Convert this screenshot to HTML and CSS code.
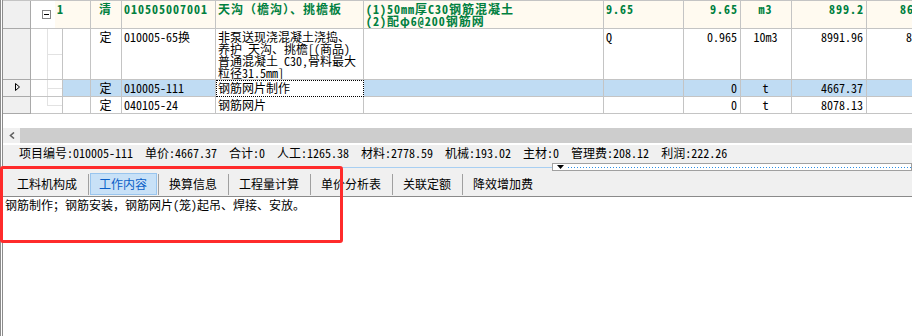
FILE: index.html
```html
<!DOCTYPE html>
<html lang="zh-CN">
<head>
    <meta charset="UTF-8">
    <meta name="viewport" content="width=device-width, initial-scale=1.0">
    <title>定额工作内容</title>
    <link rel="stylesheet" href="styles.css">
</head>
<body>
    <div class="frame">
        <div class="grid">
            <div class="row row-bill">
                <div class="cell head"></div>
                <div class="cell tree"><span class="fold"></span></div>
                <div class="cell">1</div>
                <div class="cell center">清</div>
                <div class="cell">010505007001</div>
                <div class="cell">天沟（檐沟）、挑檐板</div>
                <div class="cell">(1)50mm厚C30钢筋混凝土<br>(2)配φ6@200钢筋网</div>
                <div class="cell">9.65</div>
                <div class="cell num">9.65</div>
                <div class="cell center">m3</div>
                <div class="cell num">899.2</div>
                <div class="cell num">8677.28</div>
            </div>
            <div class="row row-tall">
                <div class="cell head"></div>
                <div class="cell tree tree-mid"></div>
                <div class="cell"></div>
                <div class="cell center">定</div>
                <div class="cell">010005-65换</div>
                <div class="cell">非泵送现浇混凝土浇捣、<br>养护 天沟、挑檐[(商品)<br>普通混凝土 C30,骨料最大<br>粒径31.5mm]</div>
                <div class="cell"></div>
                <div class="cell">Q</div>
                <div class="cell num">0.965</div>
                <div class="cell center">10m3</div>
                <div class="cell num">8991.96</div>
                <div class="cell num">8677.24</div>
            </div>
            <div class="row row-current">
                <div class="cell head"><svg class="marker" width="5" height="8" viewBox="0 0 5 8"><polygon points="0.5,0.5 4.5,4 0.5,7.5" fill="none" stroke="#000" stroke-width="1"/></svg></div>
                <div class="cell tree tree-mid"></div>
                <div class="cell"></div>
                <div class="cell center">定</div>
                <div class="cell">010005-111</div>
                <div class="cell focus">钢筋网片制作</div>
                <div class="cell"></div>
                <div class="cell"></div>
                <div class="cell num">0</div>
                <div class="cell center">t</div>
                <div class="cell num">4667.37</div>
                <div class="cell num">0</div>
            </div>
            <div class="row">
                <div class="cell head"></div>
                <div class="cell tree tree-end"></div>
                <div class="cell"></div>
                <div class="cell center">定</div>
                <div class="cell">040105-24</div>
                <div class="cell">钢筋网片</div>
                <div class="cell"></div>
                <div class="cell"></div>
                <div class="cell num">0</div>
                <div class="cell center">t</div>
                <div class="cell num">8078.13</div>
                <div class="cell num">0</div>
            </div>
        </div>

        <div class="hscroll">
            <div class="hscroll-btn">
                <svg width="6" height="7" viewBox="0 0 6 7"><polyline points="5,0.5 1.5,3.5 5,6.5" fill="none" stroke="#606060" stroke-width="1.6"/></svg>
            </div>
            <div class="hscroll-thumb"></div>
        </div>

        <div class="status">
            <span>项目编号:010005-111</span>
            <span>单价:4667.37</span>
            <span>合计:0</span>
            <span>人工:1265.38</span>
            <span>材料:2778.59</span>
            <span>机械:193.02</span>
            <span>主材:0</span>
            <span>管理费:208.12</span>
            <span>利润:222.26</span>
        </div>

        <div class="splitter">
            <div class="splitter-line"></div>
            <div class="splitter-box">
                <svg width="7" height="4" viewBox="0 0 7 4"><polygon points="0,0 7,0 3.5,4" fill="#000"/></svg>
                <div class="splitter-dots"></div>
            </div>
        </div>

        <div class="tabs">
            <div class="tab">工料机构成</div>
            <div class="sep"></div>
            <div class="tab active">工作内容</div>
            <div class="sep"></div>
            <div class="tab">换算信息</div>
            <div class="sep"></div>
            <div class="tab">工程量计算</div>
            <div class="sep"></div>
            <div class="tab">单价分析表</div>
            <div class="sep"></div>
            <div class="tab">关联定额</div>
            <div class="sep"></div>
            <div class="tab">降效增加费</div>
        </div>

        <div class="content">钢筋制作；钢筋安装，钢筋网片(笼)起吊、焊接、安放。</div>
    </div>

    <div class="annotation"></div>
</body>
</html>
```

FILE: styles.css
```css
body {
    margin: 0;
    position: relative;
    font-family: "Noto Sans Mono CJK SC", "Noto Sans CJK SC", sans-serif;
    font-size: 12px;
    color: #000;
    background: #fff;
}
.frame {
    height: 336px;
    border-left: 3px double #8c8c8c;
    overflow: hidden;
}

/* grid */
.grid {
    border-top: 1px solid #c4c4c4;
    overflow: hidden;
}
.row {
    display: grid;
    grid-template-columns: 28px 32px 28px 31px 94px 148px 240px 80px 57px 51px 75px 85px;
    width: 949px;
    height: 17px;
}
.row-bill {
    grid-template-columns: 28px 24px 36px 31px 94px 148px 240px 80px 57px 51px 75px 85px;
    height: 28px;
}
.row-tall {
    height: 51px;
}
.cell {
    box-sizing: border-box;
    border-right: 1px solid #c4c4c4;
    border-bottom: 1px solid #c4c4c4;
    padding: 2px 3px 0 2px;
    line-height: 12px;
    white-space: nowrap;
    overflow: hidden;
}
.cell.head {
    background-color: #f0f0f0;
    border-color: #a9a9a9;
    padding: 3px 0 0 12px;
}
.marker {
    display: block;
}
.center {
    text-align: center;
}
.num {
    text-align: right;
}
.row-bill .cell {
    background-color: #fffaf0;
    color: #00803f;
    font-weight: bold;
    letter-spacing: 1px;
}
.row-bill .cell.num {
    padding-right: 2px;
}
.row-bill .cell.head {
    background-color: #f0f0f0;
}
.row-bill .cell.tree {
    background-color: #fff;
    border-right: none;
    padding: 9px 0 0 11px;
}
.fold {
    display: block;
    width: 9px;
    height: 9px;
    box-sizing: border-box;
    border: 1px solid #848484;
    background: linear-gradient(#000, #000) no-repeat center / 5px 1px;
}
.tree-mid {
    background:
        linear-gradient(#e2e2e2, #e2e2e2) no-repeat 16px 0 / 1px 100%,
        linear-gradient(#e2e2e2, #e2e2e2) no-repeat 16px 50% / 15px 1px;
}
.tree-end {
    background:
        linear-gradient(#e2e2e2, #e2e2e2) no-repeat 16px 0 / 1px 50%,
        linear-gradient(#e2e2e2, #e2e2e2) no-repeat 16px 50% / 15px 1px;
}
.row-current .cell {
    background-color: #c0dcf3;
}
.row-current .cell.head {
    background-color: #f0f0f0;
}
.row-current .cell.tree {
    background-color: #fff;
}
.row-current .cell.focus {
    background-color: #fff;
    border-right: 1px dotted #000;
    border-bottom: 1px dotted #000;
    outline: 1px dotted #000;
    outline-offset: -1px;
}

/* horizontal scrollbar */
.hscroll {
    display: flex;
    height: 15px;
    margin-top: 14px;
}
.hscroll-btn {
    width: 17px;
    background-color: #f0f0f0;
    padding: 4px 0 0 6px;
    box-sizing: border-box;
}
.hscroll-btn svg {
    display: block;
}
.hscroll-thumb {
    flex: 1;
    background-color: #cdcdcd;
}

/* summary line */
.status {
    display: flex;
    gap: 12px;
    height: 20px;
    box-sizing: border-box;
    border-top: 2px solid #fff;
    padding: 1px 0 0 16px;
    line-height: 14px;
    background-color: #f0f0f0;
    white-space: nowrap;
}

.splitter {
    display: flex;
    height: 8px;
    background-color: #f0f0f0;
}
.splitter-line {
    width: 549px;
    background: linear-gradient(#a8cff2, #a8cff2) no-repeat 0 4px / 100% 1px;
}
.splitter-box {
    flex: 1;
    display: flex;
    align-items: center;
    box-sizing: border-box;
    border: 1px solid #a0a0a0;
    background-color: #fff;
    padding-left: 4px;
}
.splitter-box svg {
    display: block;
}
.splitter-dots {
    flex: 1;
    height: 1px;
    margin-left: 4px;
    background: repeating-linear-gradient(to right, #2b8fe6 0 1px, transparent 1px 3px);
}

/* tabs */
.tabs {
    display: flex;
    align-items: flex-start;
    height: 26px;
    box-sizing: border-box;
    padding: 2px 0 0 4px;
    border-bottom: 1px solid #8a8a8a;
    background-color: #f0f0f0;
}
.tab {
    height: 22px;
    box-sizing: border-box;
    margin: 0 1px;
    padding: 0 9px 0 8px;
    border: 1px solid transparent;
    line-height: 20px;
    white-space: nowrap;
}
.tab.active {
    background-color: #c8e1f7;
    border-color: #99c5ee;
    color: #0a5fc8;
}
.sep {
    width: 1px;
    height: 21px;
    margin-top: 1px;
    background-color: #a0a0a0;
}

.content {
    padding: 2px;
    line-height: 12px;
    white-space: nowrap;
}

.annotation {
    position: absolute;
    left: 0;
    top: 166px;
    width: 343px;
    height: 77px;
    box-sizing: border-box;
    border: 3px solid #ff2b2b;
    border-radius: 3px;
}
```
